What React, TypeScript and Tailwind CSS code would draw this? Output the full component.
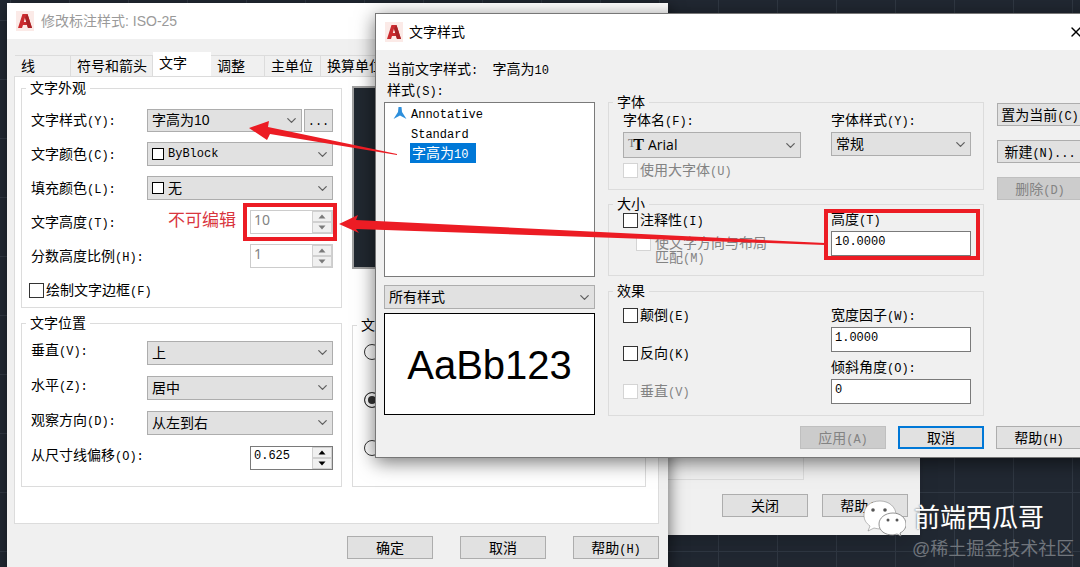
import type { ReactNode } from "react";
import { ChevronDown, X } from "lucide-react";

// half-width characters are set in a smaller monospace, like the system UI font
function T({ children }: { children: string }) {
  return (
    <span className="whitespace-pre">
      {children.split(/([\x20-\x7e]+)/).map((part, i) =>
        i % 2 ? (
          <span key={i} className="font-['Liberation_Mono',monospace] text-xs leading-none">
            {part}
          </span>
        ) : (
          part
        )
      )}
    </span>
  );
}

function AppIcon() {
  return (
    <svg viewBox="0 0 18 20" className="h-5 w-[18px] shrink-0" aria-hidden="true">
      <rect x="0" y="0" width="18" height="20" fill="#fbeae7" />
      <path d="M2 17 L6.500 3 H11.500 L16 17 H12 L11 14 H7 L6 17 Z M7.800 11 H10.300 L9 6.500 Z" fill="#cb2b2f" fillRule="evenodd" />
      <path d="M11.500 3 L16 17 H12 L9 6.500 Z" fill="#a82226" />
    </svg>
  );
}

type SelectProps = {
  id: string;
  value: string;
  className: string;
  textClass?: string;
  prefix?: ReactNode;
};

function Select({ id, value, className, textClass = "text-sm", prefix }: SelectProps) {
  return (
    <div className={`flex items-center border border-[#adadad] bg-[#e1e1e1] pl-1 pr-0.5 ${className}`}>
      {prefix}
      <select id={id} className={`min-w-0 flex-1 appearance-none bg-transparent leading-5 outline-none ${textClass}`}>
        <option>{value}</option>
      </select>
      <ChevronDown size={15} strokeWidth={2} className="shrink-0 text-[#606060]" />
    </div>
  );
}

function Swatch() {
  return <span className="mr-1 h-3 w-3 shrink-0 border border-black bg-white" />;
}

function Spinner({ id, value, disabled = false }: { id: string; value: string; disabled?: boolean }) {
  const arrow = disabled ? "#7a7a7a" : "#000000";
  return (
    <div className={`flex h-6 w-[83px] border bg-white ${disabled ? "border-[#cccccc]" : "border-[#7a7a7a]"}`}>
      <input
        id={id}
        defaultValue={value}
        disabled={disabled}
        className={`min-w-0 flex-1 px-[3px] pb-1 outline-none ${
          disabled
            ? "font-['Noto_Sans',sans-serif] text-sm text-[#838383]"
            : "font-['Liberation_Mono',monospace] text-xs"
        }`}
      />
      <div className="flex w-5 flex-col bg-[#f0f0f0]">
        <button aria-label="增加" className="flex flex-1 items-center justify-center border border-[#d0d0d0]">
          <svg viewBox="0 0 8 5" className="h-[5px] w-2">
            <path d="M0.500 4.500 L4 0.500 L7.500 4.500 Z" fill={arrow} />
          </svg>
        </button>
        <button aria-label="减少" className="flex flex-1 items-center justify-center border border-[#d0d0d0]">
          <svg viewBox="0 0 8 5" className="h-[5px] w-2">
            <path d="M0.500 0.500 L4 4.500 L7.500 0.500 Z" fill={arrow} />
          </svg>
        </button>
      </div>
    </div>
  );
}

function Check({ label, disabled = false, className = "" }: { label: string; disabled?: boolean; className?: string }) {
  return (
    <label className={`flex items-center gap-0.5 ${disabled ? "text-[#838383]" : ""} ${className}`}>
      <input
        type="checkbox"
        disabled={disabled}
        className={`h-[15px] w-[15px] shrink-0 appearance-none border bg-white ${
          disabled ? "border-[#d4d4d4]" : "border-[#333333]"
        }`}
      />
      <T>{label}</T>
    </label>
  );
}

function Group({ title, className, children }: { title: string; className: string; children?: ReactNode }) {
  return (
    <fieldset className={`border border-[#dcdcdc] ${className}`}>
      <legend className="ml-1 h-5 px-1 leading-5">{title}</legend>
      {children}
    </fieldset>
  );
}

function Row({ id, label, children }: { id: string; label: string; children: ReactNode }) {
  return (
    <div className="flex h-[34px] items-center justify-between pl-[9px] pr-2">
      <label htmlFor={id}>
        <T>{label}</T>
      </label>
      {children}
    </div>
  );
}

function PositionRow({ id, label, children }: { id: string; label: string; children: ReactNode }) {
  return (
    <div className="flex h-[35px] items-center justify-between pl-[9px] pr-2">
      <label htmlFor={id} className="pb-1.5">
        <T>{label}</T>
      </label>
      {children}
    </div>
  );
}

function Button({ children, variant = "normal" }: { children: string; variant?: "normal" | "primary" | "disabled" }) {
  const styles = {
    normal: "border border-[#adadad] bg-[#e1e1e1]",
    primary: "border-2 border-[#0078d7] bg-[#e1e1e1]",
    disabled: "border border-[#bfbfbf] bg-[#cccccc] text-[#838383]",
  };
  return (
    <button
      disabled={variant === "disabled"}
      className={`flex h-[23px] w-[86px] shrink-0 items-center justify-center whitespace-nowrap ${styles[variant]}`}
    >
      <T>{children}</T>
    </button>
  );
}

function Field({ id, label, value }: { id: string; label: string; value: string }) {
  return (
    <div className="flex flex-col gap-[3px]">
      <label htmlFor={id} className="h-[18px] leading-[18px]">
        <T>{label}</T>
      </label>
      <input
        id={id}
        defaultValue={value}
        className="h-[25px] w-[140px] border border-[#7a7a7a] bg-white px-[3px] pb-1 font-['Liberation_Mono',monospace] text-xs outline-none"
      />
    </div>
  );
}

function ManagerWindow() {
  return (
    <section className="absolute left-[500px] top-[60px] flex h-[475px] w-[420px] flex-col bg-[#f0f0f0] shadow-xl">
      <div className="mr-[116px] flex-1 border-b border-r border-[#dcdcdc]" />
      <div className="flex h-[55px] items-center justify-end gap-[14px] pb-1 pr-3">
        <Button>关闭</Button>
        <Button>帮助(H)</Button>
      </div>
    </section>
  );
}

const tabs = [
  { name: "线", width: "w-14" },
  { name: "符号和箭头", width: "w-[82px]" },
  { name: "文字", width: "w-[58px]" },
  { name: "调整", width: "w-[54px]" },
  { name: "主单位", width: "w-14" },
  { name: "换算单位", width: "w-[70px]" },
];

const alignments = ["水平", "与尺寸线对齐", "ISO 标准"];

function DimensionWindow() {
  return (
    <section className="absolute left-[7px] top-[3px] flex w-[661px] flex-col bg-[#f0f0f0] shadow-[2px_4px_14px_rgba(0,0,0,0.5)]">
      <header className="flex h-9 items-center gap-[7px] bg-white pl-[9px] text-[#9a9a9a]">
        <AppIcon />
        <h1>修改标注样式: ISO-25</h1>
      </header>

      <nav className="ml-2 mt-[13px] flex h-6 items-end">
        {tabs.map((tab) => (
          <button
            key={tab.name}
            className={`${tab.width} whitespace-nowrap border-r pl-[6px] text-left ${
              tab.name === "文字"
                ? "h-6 border-white bg-white pb-0.5"
                : "h-[21px] border-t border-[#dcdcdc] bg-[#f0f0f0]"
            }`}
          >
            {tab.name}
          </button>
        ))}
      </nav>

      <div className="ml-[7px] mr-[9px] flex gap-[10px] border border-[#dcdcdc] bg-white pb-9 pl-[6px] pr-3 pt-px">
        <div className="flex w-[321px] shrink-0 flex-col gap-[5px]">
          <Group title="文字外观" className="">
            <div className="pt-[5px]">
              <Row id="text-style" label="文字样式(Y):">
                <div className="flex w-[186px] gap-0.5">
                  <Select id="text-style" value="字高为10" className="h-[23px] min-w-0 flex-1" />
                  <button className="w-[29px] border border-[#adadad] bg-[#e1e1e1]">
                    <T>...</T>
                  </button>
                </div>
              </Row>
              <Row id="text-color" label="文字颜色(C):">
                <Select
                  id="text-color"
                  value="ByBlock"
                  className="h-6 w-[186px]"
                  textClass="font-['Liberation_Mono',monospace] text-xs"
                  prefix={<Swatch />}
                />
              </Row>
              <Row id="fill-color" label="填充颜色(L):">
                <Select id="fill-color" value="无" className="h-6 w-[186px]" prefix={<Swatch />} />
              </Row>
              <Row id="text-height" label="文字高度(T):">
                <Spinner id="text-height" value="10" disabled />
              </Row>
              <Row id="fraction-scale" label="分数高度比例(H):">
                <Spinner id="fraction-scale" value="1" disabled />
              </Row>
              <Check label="绘制文字边框(F)" className="h-[34px] pl-[7px]" />
            </div>
          </Group>

          <Group title="文字位置" className="pb-[11px]">
            <div className="pt-0.5">
              <PositionRow id="vertical" label="垂直(V):">
                <Select id="vertical" value="上" className="h-6 w-[186px]" />
              </PositionRow>
              <PositionRow id="horizontal" label="水平(Z):">
                <Select id="horizontal" value="居中" className="h-6 w-[186px]" />
              </PositionRow>
              <PositionRow id="direction" label="观察方向(D):">
                <Select id="direction" value="从左到右" className="h-6 w-[186px]" />
              </PositionRow>
              <PositionRow id="offset" label="从尺寸线偏移(O):">
                <Spinner id="offset" value="0.625" />
              </PositionRow>
            </div>
          </Group>
        </div>

        <div className="flex flex-1 flex-col pt-2">
          <div className="h-[183px] border-2 border-[#a0a0a0] bg-[#212830]" />
          <Group title="文字对齐" className="mt-[46px] flex-1">
            <div className="flex flex-col items-start gap-8 pl-[11px] pt-[9px]">
              {alignments.map((name, i) => (
                <input
                  key={name}
                  type="radio"
                  name="align"
                  aria-label={name}
                  defaultChecked={i === 1}
                  className="h-4 w-4 appearance-none rounded-full border border-[#333333] bg-white checked:bg-[#333333] checked:shadow-[inset_0_0_0_3px_white]"
                />
              ))}
            </div>
          </Group>
        </div>
      </div>

      <footer className="flex h-[60px] justify-end gap-[27px] pr-[9px] pt-3">
        <Button>确定</Button>
        <Button>取消</Button>
        <Button>帮助(H)</Button>
      </footer>
    </section>
  );
}

function TextStyleWindow() {
  return (
    <section className="absolute left-[375px] top-[13px] flex w-[720px] flex-col border border-[#777777] bg-[#f0f0f0] shadow-[0_4px_18px_rgba(0,0,0,0.55)]">
      <header className="flex h-9 items-center justify-between bg-white pl-[9px] pr-[10px]">
        <div className="flex items-center gap-[6px]">
          <AppIcon />
          <h2>文字样式</h2>
        </div>
        <button aria-label="关闭">
          <X size={16} strokeWidth={2} />
        </button>
      </header>

      <div className="flex gap-[13px] pl-2 pt-[9px]">
        <div className="flex w-[211px] shrink-0 flex-col">
          <p className="h-[21px] pl-[3px] leading-[21px]">
            <T>当前文字样式:  字高为10</T>
          </p>
          <p className="h-[22px] pl-[3px] leading-[21px]">
            <T>样式(S):</T>
          </p>
          <ul className="h-[175px] border border-[#7a7a7a] bg-white">
            <li className="flex h-5 items-center pl-2">
              <svg viewBox="0 0 14 14" className="mr-1 h-[14px] w-[14px]" aria-hidden="true">
                <path d="M5.500 1 H8.500 L9 6 L13.500 13 L7 9.500 L0.500 13 L5 6 Z" fill="#2d8fdc" />
              </svg>
              <T>Annotative</T>
            </li>
            <li className="flex h-5 items-center pl-[26px]">
              <T>Standard</T>
            </li>
            <li className="ml-[25px] flex h-5 w-[66px] items-center bg-[#0078d7] pl-0.5 text-white">
              <T>字高为10</T>
            </li>
          </ul>
          <Select id="style-filter" value="所有样式" className="mt-2 h-6" />
          <div className="mt-1 flex h-[102px] items-center justify-center border border-black bg-white pt-1 font-['Liberation_Sans',sans-serif] text-[40px]">
            AaBb123
          </div>
        </div>

        <div className="flex w-[376px] shrink-0 flex-col pt-[33px]">
          <Group title="字体" className="h-[98px]">
            <div className="-mt-0.5 flex pl-[14px]">
              <div className="flex w-[208px] flex-col">
                <label htmlFor="font-name" className="h-[22px]">
                  <T>字体名(F):</T>
                </label>
                <Select
                  id="font-name"
                  value="Arial"
                  className="h-[26px] w-[178px]"
                  textClass="font-['Open_Sans',sans-serif] text-sm"
                  prefix={
                    <span className="mr-1 flex font-['Liberation_Serif',serif] leading-4" aria-hidden="true">
                      <span className="text-xs leading-3 text-[#777777]">T</span>
                      <span className="-ml-0.5 text-base font-bold leading-4">T</span>
                    </span>
                  }
                />
                <Check label="使用大字体(U)" disabled className="h-6" />
              </div>
              <div className="flex flex-col">
                <label htmlFor="font-style" className="h-[22px]">
                  <T>字体样式(Y):</T>
                </label>
                <Select id="font-style" value="常规" className="h-6 w-[140px]" />
              </div>
            </div>
          </Group>

          <Group title="大小" className="mt-1 h-[82px]">
            <div className="-mt-1 flex pl-[14px]">
              <div className="w-[208px]">
                <Check label="注释性(I)" className="h-5" />
                <label className="mt-[6px] flex items-start gap-1 pl-[13px] leading-[14px] text-[#838383]">
                  <input type="checkbox" disabled className="h-[15px] w-[15px] appearance-none border border-[#d4d4d4] bg-white" />
                  <span>
                    使文字方向与布局
                    <br />
                    <T>匹配(M)</T>
                  </span>
                </label>
              </div>
              <Field id="height" label="高度(T)" value="10.0000" />
            </div>
          </Group>

          <Group title="效果" className="mt-[5px] h-[135px]">
            <div className="flex pl-[14px]">
              <div className="flex w-[208px] flex-col gap-[10px]">
                <Check label="颠倒(E)" className="h-7" />
                <Check label="反向(K)" className="h-7" />
                <Check label="垂直(V)" disabled className="h-7" />
              </div>
              <div className="flex flex-col gap-[6px] pt-[5px]">
                <Field id="width-factor" label="宽度因子(W):" value="1.0000" />
                <Field id="oblique" label="倾斜角度(O):" value="0" />
              </div>
            </div>
          </Group>
        </div>

        <div className="flex flex-col gap-[14px] pt-[44px]">
          <Button>置为当前(C)</Button>
          <Button>新建(N)...</Button>
          <Button variant="disabled">删除(D)</Button>
        </div>
      </div>

      <footer className="flex justify-end gap-3 pb-2 pr-3 pt-[10px]">
        <Button variant="disabled">应用(A)</Button>
        <Button variant="primary">取消</Button>
        <Button>帮助(H)</Button>
      </footer>
    </section>
  );
}

function Annotations() {
  return (
    <div className="pointer-events-none absolute inset-0">
      <svg width="1080" height="567" viewBox="0 0 1080 567" className="absolute left-0 top-0" aria-hidden="true">
        <g fill="#ec1c24">
          <path d="M249 128 L269 121 L268 127 L397 154 L397 155 L270 134 L267 140 Z" />
          <path d="M339 224 L358 215 L356 220 L825 243 L825 245 L356 229 L359 233 Z" />
        </g>
        <g fill="none" stroke="#ec1c24" strokeWidth="4">
          <rect x="245" y="205" width="90" height="34" />
          <rect x="826" y="211" width="152" height="47" />
        </g>
      </svg>
      <p className="absolute left-[168px] top-[209px] text-[17px] leading-6 text-[#d9363e]">不可编辑</p>
    </div>
  );
}

function Watermark() {
  return (
    <div className="pointer-events-none absolute left-[862px] top-[497px] flex flex-col">
      <div className="flex items-center gap-2">
        <svg viewBox="0 0 44 38" className="h-[38px] w-11" aria-hidden="true">
          <path d="M18 2 C8 2 2 8 2 16 C2 21 4 24 8 27 L6 32 L12 29 Q16 30 19 30 C28 30 34 24 34 16 C34 8 27 2 18 2 Z" fill="#fff" stroke="#777" strokeWidth="0.500" />
          <path d="M31 14 C23 14 17 19 17 25 C17 32 23 36 31 36 L35 35 L39 37 L38 34 C42 32 44 29 44 25 C44 19 38 14 31 14 Z" fill="#fff" stroke="#777" strokeWidth="0.800" />
          <g fill="#555">
            <circle cx="11" cy="11" r="1.800" />
            <circle cx="23" cy="11" r="1.800" />
            <circle cx="26" cy="21" r="1.500" />
            <circle cx="35" cy="21" r="1.500" />
          </g>
        </svg>
        <p className="text-[26px] leading-[42px] text-white [text-shadow:0_0_2px_#333333]">前端西瓜哥</p>
      </div>
      <p className="pl-[50px] text-lg leading-5 text-[#70757c]">@稀土掘金技术社区</p>
    </div>
  );
}

export default function App() {
  return (
    <main className="relative h-screen w-full overflow-hidden bg-[#212832] bg-[linear-gradient(to_right,#303843_1px,transparent_1px),linear-gradient(to_bottom,#303843_1px,transparent_1px)] bg-[length:59px_59px] bg-[position:10px_20px] font-['Liberation_Sans','Noto_Sans_CJK_SC',sans-serif] text-sm text-black">
      <ManagerWindow />
      <DimensionWindow />
      <TextStyleWindow />
      <Annotations />
      <Watermark />
    </main>
  );
}
